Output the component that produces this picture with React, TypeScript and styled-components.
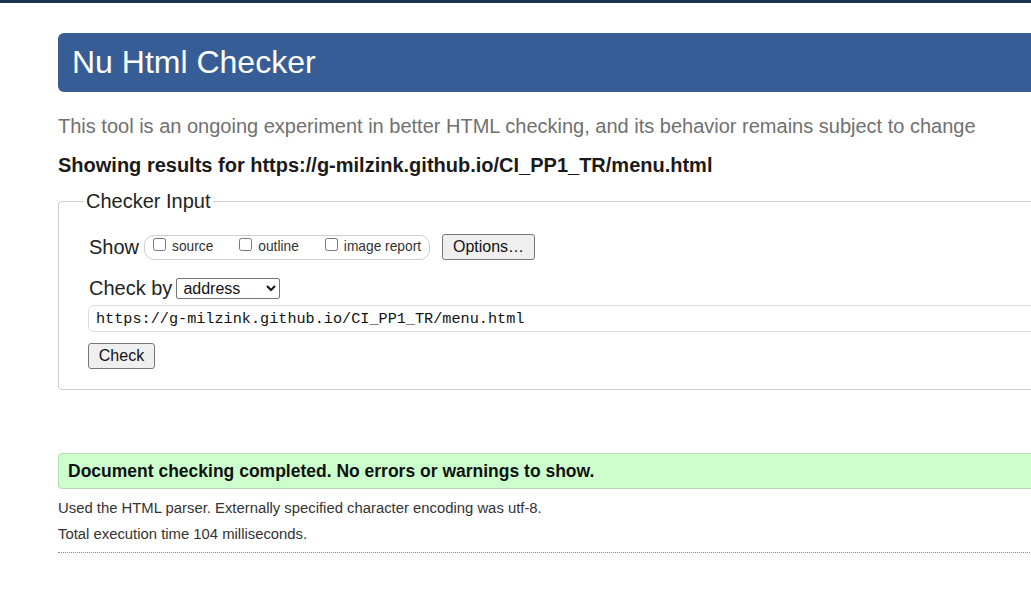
import React from "react";
import styled, { createGlobalStyle } from "styled-components";

const Global = createGlobalStyle`
  html, body { margin: 0; padding: 0; background: #fff; overflow: hidden; }
  body { font-family: "Liberation Sans", Arial, sans-serif; color: #111; }
`;

const TopBar = styled.div`
  height: 3px;
  background: #1d3354;
`;

const Page = styled.main`
  width: 1160px;
  padding-left: 58px;
  display: flex;
  flex-direction: column;
`;

const Header = styled.header`
  margin-top: 30px;
  height: 59px;
  background: #365d95;
  border-radius: 6px;
  display: flex;
  align-items: center;
  padding-left: 14px;
`;

const Title = styled.h1`
  margin: 0;
  font-size: 32px;
  font-weight: normal;
  color: #fff;
  line-height: 59px;
`;

const Subtitle = styled.p`
  margin: 22px 0 0;
  font-size: 20px;
  line-height: 24px;
  color: #707070;
`;

const Showing = styled.p`
  margin: 15px 0 0;
  font-size: 20px;
  line-height: 24px;
  font-weight: bold;
  color: #1a1a1a;
`;

const Fieldset = styled.fieldset`
  margin: 12px 0 0;
  border: 1px solid #cccccc;
  border-radius: 4px;
  padding: 21px 0 20px 30px;
  min-width: 0;
`;

const Legend = styled.legend`
  margin-left: -5px;
  padding: 0 2px;
  font-size: 20px;
  line-height: 24px;
  color: #222;
`;

const Row = styled.div<{ $top: number }>`
  display: flex;
  align-items: center;
  margin-top: ${(p) => p.$top}px;
`;

const RowLabel = styled.span`
  font-size: 20px;
  line-height: 24px;
  color: #222;
  margin-right: 6px;
`;

const OptionGroup = styled.div`
  display: flex;
  align-items: center;
  height: 23px;
  border: 1px solid #cfcfcf;
  border-radius: 10px;
  padding: 0 8px 0 8px;
  margin-left: -1px;
  gap: 26px;
`;

const CheckLabel = styled.label`
  display: flex;
  align-items: center;
  font-size: 13.75px;
  color: #333;
  line-height: 16px;
`;

const Box = styled.input`
  width: 13px;
  height: 13px;
  margin: 0 6px 0 0;
  position: relative;
  top: -3px;
`;

const Btn = styled.button<{ $w: number }>`
  font-family: "Liberation Sans", Arial, sans-serif;
  font-size: 16px;
  height: 26px;
  width: ${(p) => p.$w}px;
  padding: 0;
  background: #efefef;
  color: #111;
  border: 1px solid #767676;
  border-radius: 3px;
`;

const Select = styled.select`
  font-family: "Liberation Sans", Arial, sans-serif;
  font-size: 16px;
  height: 21px;
  width: 104px;
  padding: 0 2px;
  background: #fff;
  color: #111;
  border: 1px solid #767676;
  border-radius: 2px;
  margin-left: -2px;
`;

const UrlInput = styled.input`
  margin-top: 5px;
  margin-left: -1px;
  height: 27px;
  box-sizing: border-box;
  width: 1100px;
  border: 1px solid #dcdcdc;
  border-radius: 6px;
  padding: 0 7px;
  font-family: "Liberation Mono", "DejaVu Sans Mono", monospace;
  font-size: 15.2px;
  color: #111;
`;

const ButtonRow = styled.div`
  margin-top: 11px;
  margin-left: -1px;
`;

const Success = styled.div`
  margin-top: 63px;
  height: 36px;
  box-sizing: border-box;
  background: #ccffcc;
  border: 1px solid #b6dcb6;
  border-radius: 4px;
  padding-left: 9px;
  display: flex;
  align-items: center;
  font-size: 17.5px;
  font-weight: bold;
  color: #111;
`;

const Details = styled.div`
  margin-top: 6px;
  display: flex;
  flex-direction: column;
`;

const Detail = styled.p`
  margin: 0;
  font-size: 14.85px;
  line-height: 26px;
  color: #333;
`;

const Rule = styled.hr`
  margin: 5px 0 0;
  border: 0;
  border-top: 1px dotted #8a8a8a;
  height: 0;
`;

export default function App() {
  return (
    <>
      <Global />
      <TopBar />
      <Page>
        <Header>
          <Title>Nu Html Checker</Title>
        </Header>
        <Subtitle>
          This tool is an ongoing experiment in better HTML checking, and its behavior remains subject to change
        </Subtitle>
        <Showing>Showing results for https://g-milzink.github.io/CI_PP1_TR/menu.html</Showing>
        <Fieldset>
          <Legend>Checker Input</Legend>
          <Row $top={0}>
            <RowLabel>Show</RowLabel>
            <OptionGroup>
              <CheckLabel>
                <Box type="checkbox" />
                source
              </CheckLabel>
              <CheckLabel>
                <Box type="checkbox" />
                outline
              </CheckLabel>
              <CheckLabel>
                <Box type="checkbox" />
                image report
              </CheckLabel>
            </OptionGroup>
            <Btn $w={93} style={{ marginLeft: 12 }}>Options…</Btn>
          </Row>
          <Row $top={16}>
            <RowLabel>Check by</RowLabel>
            <Select defaultValue="address">
              <option value="address">address</option>
              <option value="file">file upload</option>
              <option value="text">text input</option>
            </Select>
          </Row>
          <UrlInput defaultValue="https://g-milzink.github.io/CI_PP1_TR/menu.html" />
          <ButtonRow>
            <Btn $w={67}>Check</Btn>
          </ButtonRow>
        </Fieldset>
        <Success>Document checking completed. No errors or warnings to show.</Success>
        <Details>
          <Detail>Used the HTML parser. Externally specified character encoding was utf-8.</Detail>
          <Detail>Total execution time 104 milliseconds.</Detail>
        </Details>
        <Rule />
      </Page>
    </>
  );
}
